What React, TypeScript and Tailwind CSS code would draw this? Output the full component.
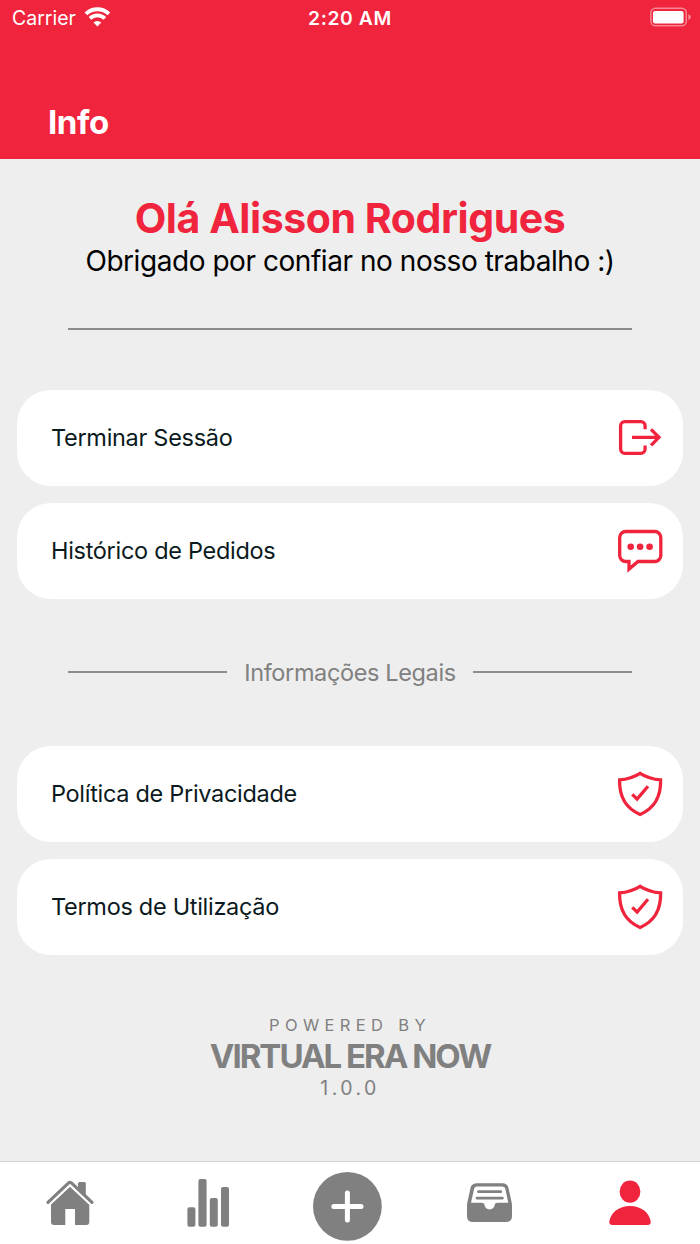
import type { ReactNode } from 'react';

interface RowProps {
  label: string;
  icon: ReactNode;
}

function WifiIcon() {
  return (
    <svg
      className="-mt-1"
      width="27"
      height="20"
      viewBox="0 0 27 20"
      fill="none"
      stroke="white"
    >
      <path d="M1.9 6.9a16.6 16.6 0 0 1 23 0" strokeWidth="4" />
      <path d="M5.9 11.4a10.8 10.8 0 0 1 15 0" strokeWidth="3.6" />
      <path
        d="M13.4 19.4 9.5 15.5a5.5 5.5 0 0 1 7.8 0z"
        fill="white"
        stroke="none"
      />
    </svg>
  );
}

function BatteryIcon() {
  return (
    <svg className="-mt-1" width="42" height="20" viewBox="0 0 42 20">
      <rect
        x="0.9"
        y="1.2"
        width="35.4"
        height="17.6"
        rx="4.6"
        fill="none"
        stroke="white"
        strokeOpacity="0.45"
        strokeWidth="1.5"
      />
      <rect x="3" y="4" width="30.6" height="12.4" rx="2" fill="white" />
      <path d="M38.4 7.2q2.4 1 2.4 2.9t-2.4 2.9z" fill="white" opacity="0.5" />
    </svg>
  );
}

const rowIcon = 'h-[46px] w-[46px] fill-none stroke-[#f0243c] stroke-[3.3]';

function LogoutIcon() {
  return (
    <svg className={rowIcon} viewBox="17 15 46 46">
      <path d="M45.1 29.3v-3.5a4.2 4.2 0 0 0-4.2-4.2H24.8a4.2 4.2 0 0 0-4.2 4.2v23.3a4.2 4.2 0 0 0 4.2 4.2h16.1a4.2 4.2 0 0 0 4.2-4.2v-3.7" />
      <path d="M32 37.3h27.5M51 29.3l8 8-8 8" />
    </svg>
  );
}

function ChatIcon() {
  return (
    <svg className={rowIcon} viewBox="17 13 46 46">
      <path d="M29 46.5h-3.3a6 6 0 0 1-6-6v-18a6 6 0 0 1 6-6h29.1a6 6 0 0 1 6 6v18a6 6 0 0 1-6 6H38l-9 7.6z" />
      <g fill="#f0243c" stroke="none">
        <circle cx="30.7" cy="31.7" r="3.3" />
        <circle cx="40.1" cy="31.7" r="3.3" />
        <circle cx="49.6" cy="31.7" r="3.3" />
      </g>
    </svg>
  );
}

function ShieldIcon() {
  return (
    <svg className={rowIcon} viewBox="17 16 46 46">
      <path d="M40.1 18.3c-6 3.8-12.6 6-20.5 6.6-.4 16.3 6.4 28.6 20.5 34.5 14.1-5.9 20.9-18.2 20.5-34.5-7.9-.6-14.5-2.8-20.5-6.6z" />
      <path d="m32.3 39.3 4.8 4.8L48 31.3" />
    </svg>
  );
}

const tabIcon = 'h-[82px] w-20 fill-[#808080]';

function HomeTab() {
  return (
    <svg className={tabIcon} viewBox="0 0 80 82">
      <path d="M48 27.5v-6q0-1.5 1.5-1.5h4.8q1.5 0 1.5 1.5V35z" />
      <path d="m40 22.9 19.3 18.9V60q0 3-3 3H45V47h-9.7v16H24q-3 0-3-3V41.8z" />
      <path d="M20.2 42.2 40 23.6l19.8 18.6" fill="none" stroke="white" strokeWidth="1.8" />
      <path
        d="M18 40.4 38.6 20.9q1.4-1.2 2.8 0L62 40.4"
        fill="none"
        stroke="#808080"
        strokeWidth="3.2"
        strokeLinecap="round"
      />
    </svg>
  );
}

function StatsTab() {
  return (
    <svg className={tabIcon} viewBox="0 0 80 82">
      <rect x="17.4" y="45.3" width="8" height="19.5" rx="2" />
      <rect x="28.4" y="17" width="8.2" height="47.8" rx="2" />
      <rect x="39.8" y="36" width="8" height="28.8" rx="2" />
      <rect x="51" y="25" width="8" height="39.8" rx="2" />
    </svg>
  );
}

function AddTab() {
  return (
    <svg className={tabIcon} viewBox="0 0 80 82">
      <circle cx="37.4" cy="44.4" r="34.4" />
      <path
        d="M23.8 44.4h27.2M37.4 31v27"
        stroke="white"
        strokeWidth="5"
        strokeLinecap="round"
      />
    </svg>
  );
}

function InboxTab() {
  return (
    <svg className={tabIcon} viewBox="0 0 80 82">
      <path
        fillRule="evenodd"
        d="M27 21.3h25.4c3.3 0 5.4 1.4 6.1 4.8l2.9 13.2q.6 2 .6 4V54q0 6-6 6H23q-6 0-6-6V43.3q0-2 .6-4l2.9-13.2c.7-3.4 3-4.8 6.5-4.8zM27.3 24.6c-2 0-2.9.8-3.3 2.6L21 40.7h10.6c1.8 0 2.7.8 2.9 2.4.4 2.8 2.4 4.4 5.1 4.4s4.7-1.6 5.1-4.4c.2-1.6 1.1-2.4 2.9-2.4H58.3L55.4 27.2c-.4-1.8-1.3-2.6-3.3-2.6z"
      />
      <path
        d="M28.5 29.7h22.2M27 36.1h25.4"
        stroke="#808080"
        strokeWidth="2.8"
        strokeLinecap="round"
      />
    </svg>
  );
}

function ProfileTab() {
  return (
    <svg className="h-[82px] w-20 fill-[#f0243c]" viewBox="0 0 80 82">
      <ellipse cx="40" cy="29.6" rx="10.4" ry="11.2" />
      <path d="M40 44c11.5 0 19.4 7 20.7 15.5.3 2.2-.8 3.5-3 3.5H22.3c-2.2 0-3.3-1.3-3-3.5C20.6 51 28.5 44 40 44z" />
    </svg>
  );
}

function Row({ label, icon }: RowProps) {
  return (
    <button className="flex h-24 w-full items-center justify-between rounded-[34px] bg-white pr-5 pl-[34px] text-[#0b1a20]">
      <span className="text-[23.5px] tracking-[-0.3px]">{label}</span>
      {icon}
    </button>
  );
}

export default function App() {
  return (
    <div className="flex h-[1244px] w-[700px] flex-col overflow-hidden bg-[#eeeeee] font-['Inter',sans-serif] whitespace-nowrap">
      <header className="flex h-[159px] flex-col justify-between bg-[#f0243c] text-white">
        <div className="grid h-[37px] grid-cols-[1fr_auto_1fr] items-center pr-2 pl-3">
          <div className="flex items-center gap-2">
            <span className="text-[19.5px]">Carrier</span>
            <WifiIcon />
          </div>
          <span className="mr-1 text-center text-[19.3px] font-semibold tracking-[0.6px]">
            2:20 AM
          </span>
          <div className="flex justify-end">
            <BatteryIcon />
          </div>
        </div>
        <h1 className="mb-[17px] pl-12 text-[33px] leading-10 font-bold tracking-[-0.4px]">
          Info
        </h1>
      </header>

      <main className="flex flex-1 flex-col px-[17px]">
        <h2 className="mt-[39px] text-center text-[41px] leading-[41px] font-bold tracking-[-0.43px] text-[#f0243c]">
          Olá Alisson Rodrigues
        </h2>
        <p className="text-center text-[28px] leading-[45px] tracking-[-0.45px] text-black">
          Obrigado por confiar no nosso trabalho :)
        </p>
        <hr className="mx-[51px] mt-11 border-t-2 border-[#8c8c8c]" />

        <div className="mt-[59.5px] flex flex-col gap-[17px]">
          <Row label="Terminar Sessão" icon={<LogoutIcon />} />
          <Row label="Histórico de Pedidos" icon={<ChatIcon />} />
        </div>

        <div className="mx-[51px] flex h-[147px] items-center gap-[17px]">
          <hr className="flex-1 border-t-2 border-[#8c8c8c]" />
          <span className="pt-px text-[23.5px] tracking-[-0.37px] text-[#808080]">
            Informações Legais
          </span>
          <hr className="flex-1 border-t-2 border-[#8c8c8c]" />
        </div>

        <div className="flex flex-col gap-[17px]">
          <Row label="Política de Privacidade" icon={<ShieldIcon />} />
          <Row label="Termos de Utilização" icon={<ShieldIcon />} />
        </div>

        <footer className="mt-[57px] text-center text-[#808080]">
          <p className="text-[16.5px] leading-[26px] tracking-[5.35px]">POWERED BY</p>
          <p className="text-[33px] leading-9 font-bold tracking-[-2px]">
            VIRTUAL ERA NOW
          </p>
          <p className="text-[19.5px] leading-[29px] tracking-[3.4px]">1.0.0</p>
        </footer>
      </main>

      <nav className="grid h-[83px] grid-cols-5 justify-items-center border-t border-[#d4d4d4] bg-white">
        <HomeTab />
        <StatsTab />
        <AddTab />
        <InboxTab />
        <ProfileTab />
      </nav>
    </div>
  );
}
